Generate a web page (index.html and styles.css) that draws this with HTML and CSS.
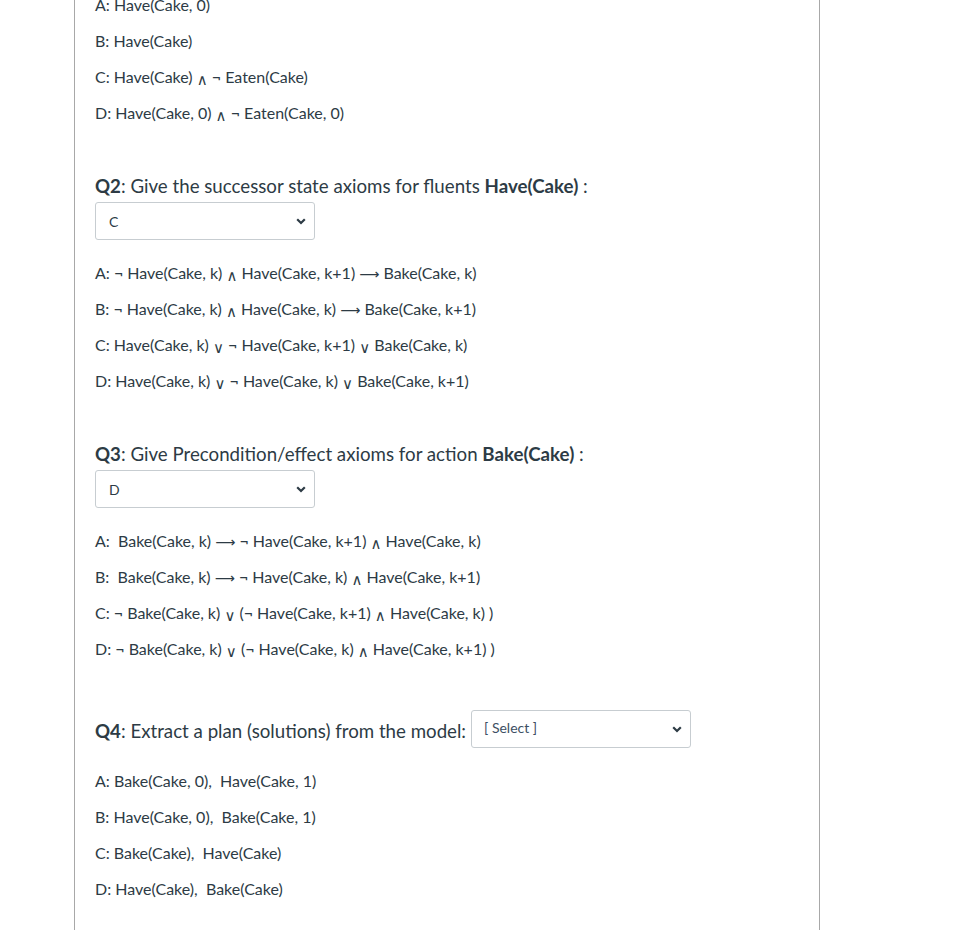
FILE: index.html
```html
<!DOCTYPE html>
<html>
<head>
<meta charset="utf-8">
<link rel="stylesheet" href="styles.css">
</head>
<body>
<div class="page">
  <div class="quiz">
    <div class="options first">
      <p class="opt">A: Have(Cake, 0)</p>
      <p class="opt">B: Have(Cake)</p>
      <p class="opt">C: Have(Cake) <span class="sym">∧</span> ¬ Eaten(Cake)</p>
      <p class="opt">D: Have(Cake, 0) <span class="sym">∧</span> ¬ Eaten(Cake, 0)</p>
    </div>

    <div class="question">
      <h2 class="q-title"><b>Q2</b>: Give the successor state axioms for fluents <b>Have(Cake)</b> :</h2>
      <div class="select"><span>C</span><svg class="chev" viewBox="0 0 10 7"><path d="M1.2 1.2 L5 5 L8.8 1.2" fill="none" stroke="#2d3b45" stroke-width="2.2"/></svg></div>
      <div class="options">
        <p class="opt">A: ¬ Have(Cake, k) <span class="sym">∧</span> Have(Cake, k+1) <span class="arr">⟶</span> Bake(Cake, k)</p>
        <p class="opt">B: ¬ Have(Cake, k) <span class="sym">∧</span> Have(Cake, k) <span class="arr">⟶</span> Bake(Cake, k+1)</p>
        <p class="opt">C: Have(Cake, k) <span class="sym">∨</span> ¬ Have(Cake, k+1) <span class="sym">∨</span> Bake(Cake, k)</p>
        <p class="opt">D: Have(Cake, k) <span class="sym">∨</span> ¬ Have(Cake, k) <span class="sym">∨</span> Bake(Cake, k+1)</p>
      </div>
    </div>

    <div class="question">
      <h2 class="q-title"><b>Q3</b>: Give Precondition/effect axioms for action <b>Bake(Cake)</b> :</h2>
      <div class="select"><span>D</span><svg class="chev" viewBox="0 0 10 7"><path d="M1.2 1.2 L5 5 L8.8 1.2" fill="none" stroke="#2d3b45" stroke-width="2.2"/></svg></div>
      <div class="options">
        <p class="opt">A:&nbsp; Bake(Cake, k) <span class="arr">⟶</span> ¬ Have(Cake, k+1) <span class="sym">∧</span> Have(Cake, k)</p>
        <p class="opt">B:&nbsp; Bake(Cake, k) <span class="arr">⟶</span> ¬ Have(Cake, k) <span class="sym">∧</span> Have(Cake, k+1)</p>
        <p class="opt">C: ¬ Bake(Cake, k) <span class="sym">∨</span> (¬ Have(Cake, k+1) <span class="sym">∧</span> Have(Cake, k) )</p>
        <p class="opt">D: ¬ Bake(Cake, k) <span class="sym">∨</span> (¬ Have(Cake, k) <span class="sym">∧</span> Have(Cake, k+1) )</p>
      </div>
    </div>

    <div class="question">
      <div class="q-row">
        <h2 class="q-title inline"><b>Q4</b>: Extract a plan (solutions) from the model:</h2>
        <div class="select"><span class="placeholder">[ Select ]</span><svg class="chev" viewBox="0 0 10 7"><path d="M1.2 1.2 L5 5 L8.8 1.2" fill="none" stroke="#2d3b45" stroke-width="2.2"/></svg></div>
      </div>
      <div class="options">
        <p class="opt">A: Bake(Cake, 0),&nbsp; Have(Cake, 1)</p>
        <p class="opt">B: Have(Cake, 0),&nbsp; Bake(Cake, 1)</p>
        <p class="opt">C: Bake(Cake),&nbsp; Have(Cake)</p>
        <p class="opt">D: Have(Cake),&nbsp; Bake(Cake)</p>
      </div>
    </div>
  </div>
</div>
</body>
</html>
```

FILE: styles.css
```css
html, body {
  margin: 0;
  padding: 0;
  background: #ffffff;
}
body {
  font-family: Lato, "Open Sans", "Liberation Sans", sans-serif;
  color: #2d3b45;
  overflow: hidden;
}
.page {
  padding-left: 74px;
}
.quiz {
  width: 746px;
  min-height: 960px;
  margin-top: -13px;
  border-left: 1px solid #a8a8a8;
  border-right: 1px solid #a8a8a8;
  padding-left: 20px;
  box-sizing: border-box;
}
.opt {
  margin: 0;
  height: 36px;
  line-height: 36px;
  font-size: 16px;
  white-space: nowrap;
}
.sym {
  font-size: 15px;
  font-family: "DejaVu Sans", sans-serif;
  position: relative;
  top: 2px;
}
.arr {
  font-family: "DejaVu Sans", sans-serif;
  font-size: 14px;
}
.question {
  margin-top: 41px;
}
.q-title {
  margin: 0;
  font-size: 18.7px;
  font-weight: 400;
  line-height: 28px;
  height: 28px;
  white-space: nowrap;
}
.q-title b {
  font-weight: 700;
}
.select {
  margin-top: 2px;
  width: 220px;
  height: 38px;
  box-sizing: border-box;
  border: 1px solid #c7cdd1;
  border-radius: 3px;
  display: flex;
  align-items: center;
  justify-content: space-between;
  padding: 0 8px 0 13px;
  font-size: 14px;
  background: #fff;
  margin-bottom: 15px;
}
.chev {
  width: 10px;
  height: 7px;
}
.q-row {
  display: flex;
  align-items: center;
  margin-top: 43px;
  margin-bottom: 15px;
  height: 38px;
}
.q-row .select {
  margin: 0 0 0 5px;
  padding-left: 12px;
}
.q-title.inline {
  position: relative;
  top: 2px;
}
.placeholder {
  font-size: 14px;
  color: #3d4f63;
  position: relative;
  top: -2px;
}
```
